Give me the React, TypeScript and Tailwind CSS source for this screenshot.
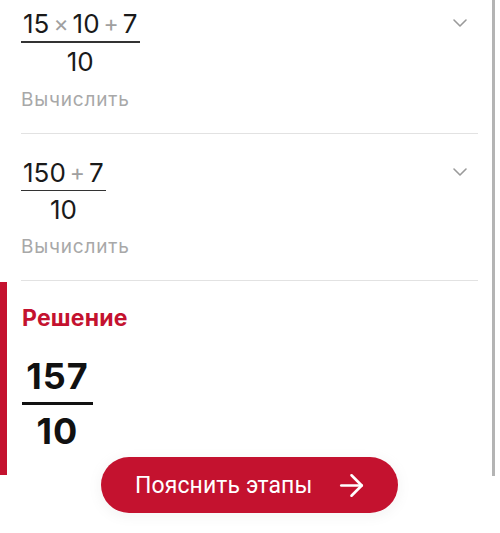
import { ArrowRight, ChevronDown } from 'lucide-react';

type Part = { t: string; op?: boolean };

const steps: { num: Part[]; den: string; pt: string; pb: string }[] = [
  {
    num: [{ t: '15' }, { t: '×', op: true }, { t: '10' }, { t: '+', op: true }, { t: '7' }],
    den: '10',
    pt: 'pt-[9px]',
    pb: 'pb-[21px]',
  },
  {
    num: [{ t: '150' }, { t: '+', op: true }, { t: '7' }],
    den: '10',
    pt: 'pt-[24px]',
    pb: 'pb-[21px]',
  },
];

function Fraction({ num, den }: { num: Part[]; den: string }) {
  return (
    <div className="inline-flex flex-col items-center">
      <div className="flex items-center px-[2px] text-[26px] leading-[30px] text-[#1a1a1a]">
        {num.map((p, i) =>
          p.op ? (
            <span key={i} className="mx-[4px] text-[23px] text-[#a0a0a0]">
              {p.t}
            </span>
          ) : (
            <span key={i}>{p.t}</span>
          ),
        )}
      </div>
      <div className="mt-[2px] h-[1.5px] w-full bg-[#333]" />
      <div className="mt-[4px] text-[26px] leading-[30px] text-[#1a1a1a]">{den}</div>
    </div>
  );
}

export default function App() {
  return (
    <div className="relative h-[533px] w-[500px] overflow-hidden bg-white" style={{ fontFamily: 'Inter, "Noto Sans", sans-serif' }}>
      <div className="flex">
        <div className="flex-1">
          {steps.map((s, i) => (
            <div key={i} className={`relative ml-[21px] mr-[14px] border-b border-[#e2e2e2] ${s.pt} ${s.pb}`}>
              <Fraction num={s.num} den={s.den} />
              <div className={`${i === 0 ? 'mt-[11px]' : 'mt-[9.5px]'} text-[19px] leading-[24px] tracking-[0.8px] text-[#a8a8a8]`}>
                Вычислить
              </div>
              <ChevronDown
                className={`absolute right-[6px] ${i === 0 ? 'top-[11px]' : 'top-[26px]'} text-[#9a9a9a]`}
                size={24}
                strokeWidth={1.6}
              />
            </div>
          ))}
          <div className="mt-[1px] flex h-[193px]">
            <div className="w-[7px] bg-[#c4122f]" />
            <div className="pl-[15px] pt-[22px]">
              <div className="text-[23px] font-bold leading-[28px] tracking-[0.2px] text-[#c4122f]">Решение</div>
              <div className="mt-[24px] inline-flex flex-col items-center">
                <div className="px-[3px] text-[36px] font-bold leading-[40px] tracking-[1px] text-[#111]">157</div>
                <div className="mt-[6px] h-[3px] w-[71px] bg-[#111]" />
                <div className="mt-[6px] text-[36px] font-bold leading-[40px] tracking-[1px] text-[#111]">10</div>
              </div>
            </div>
          </div>
        </div>
        <div className="h-[476px] w-[3px] bg-[#b4b4b4]" />
        <div className="w-[5px]" />
      </div>

      <button
        className="absolute left-[101px] top-[457px] flex h-[56px] w-[297px] items-center rounded-full bg-[#c4122f] pl-[34px] text-white shadow-[0_0_24px_12px_rgba(255,255,255,0.9),0_2px_12px_rgba(0,0,0,0.18)]"
        style={{ fontFamily: 'Roboto, "Noto Sans", sans-serif' }}
      >
        <span className="text-[23px] leading-none tracking-[0.1px]">Пояснить этапы</span>
        <ArrowRight className="ml-[22px]" size={35} strokeWidth={1.8} />
      </button>
    </div>
  );
}
